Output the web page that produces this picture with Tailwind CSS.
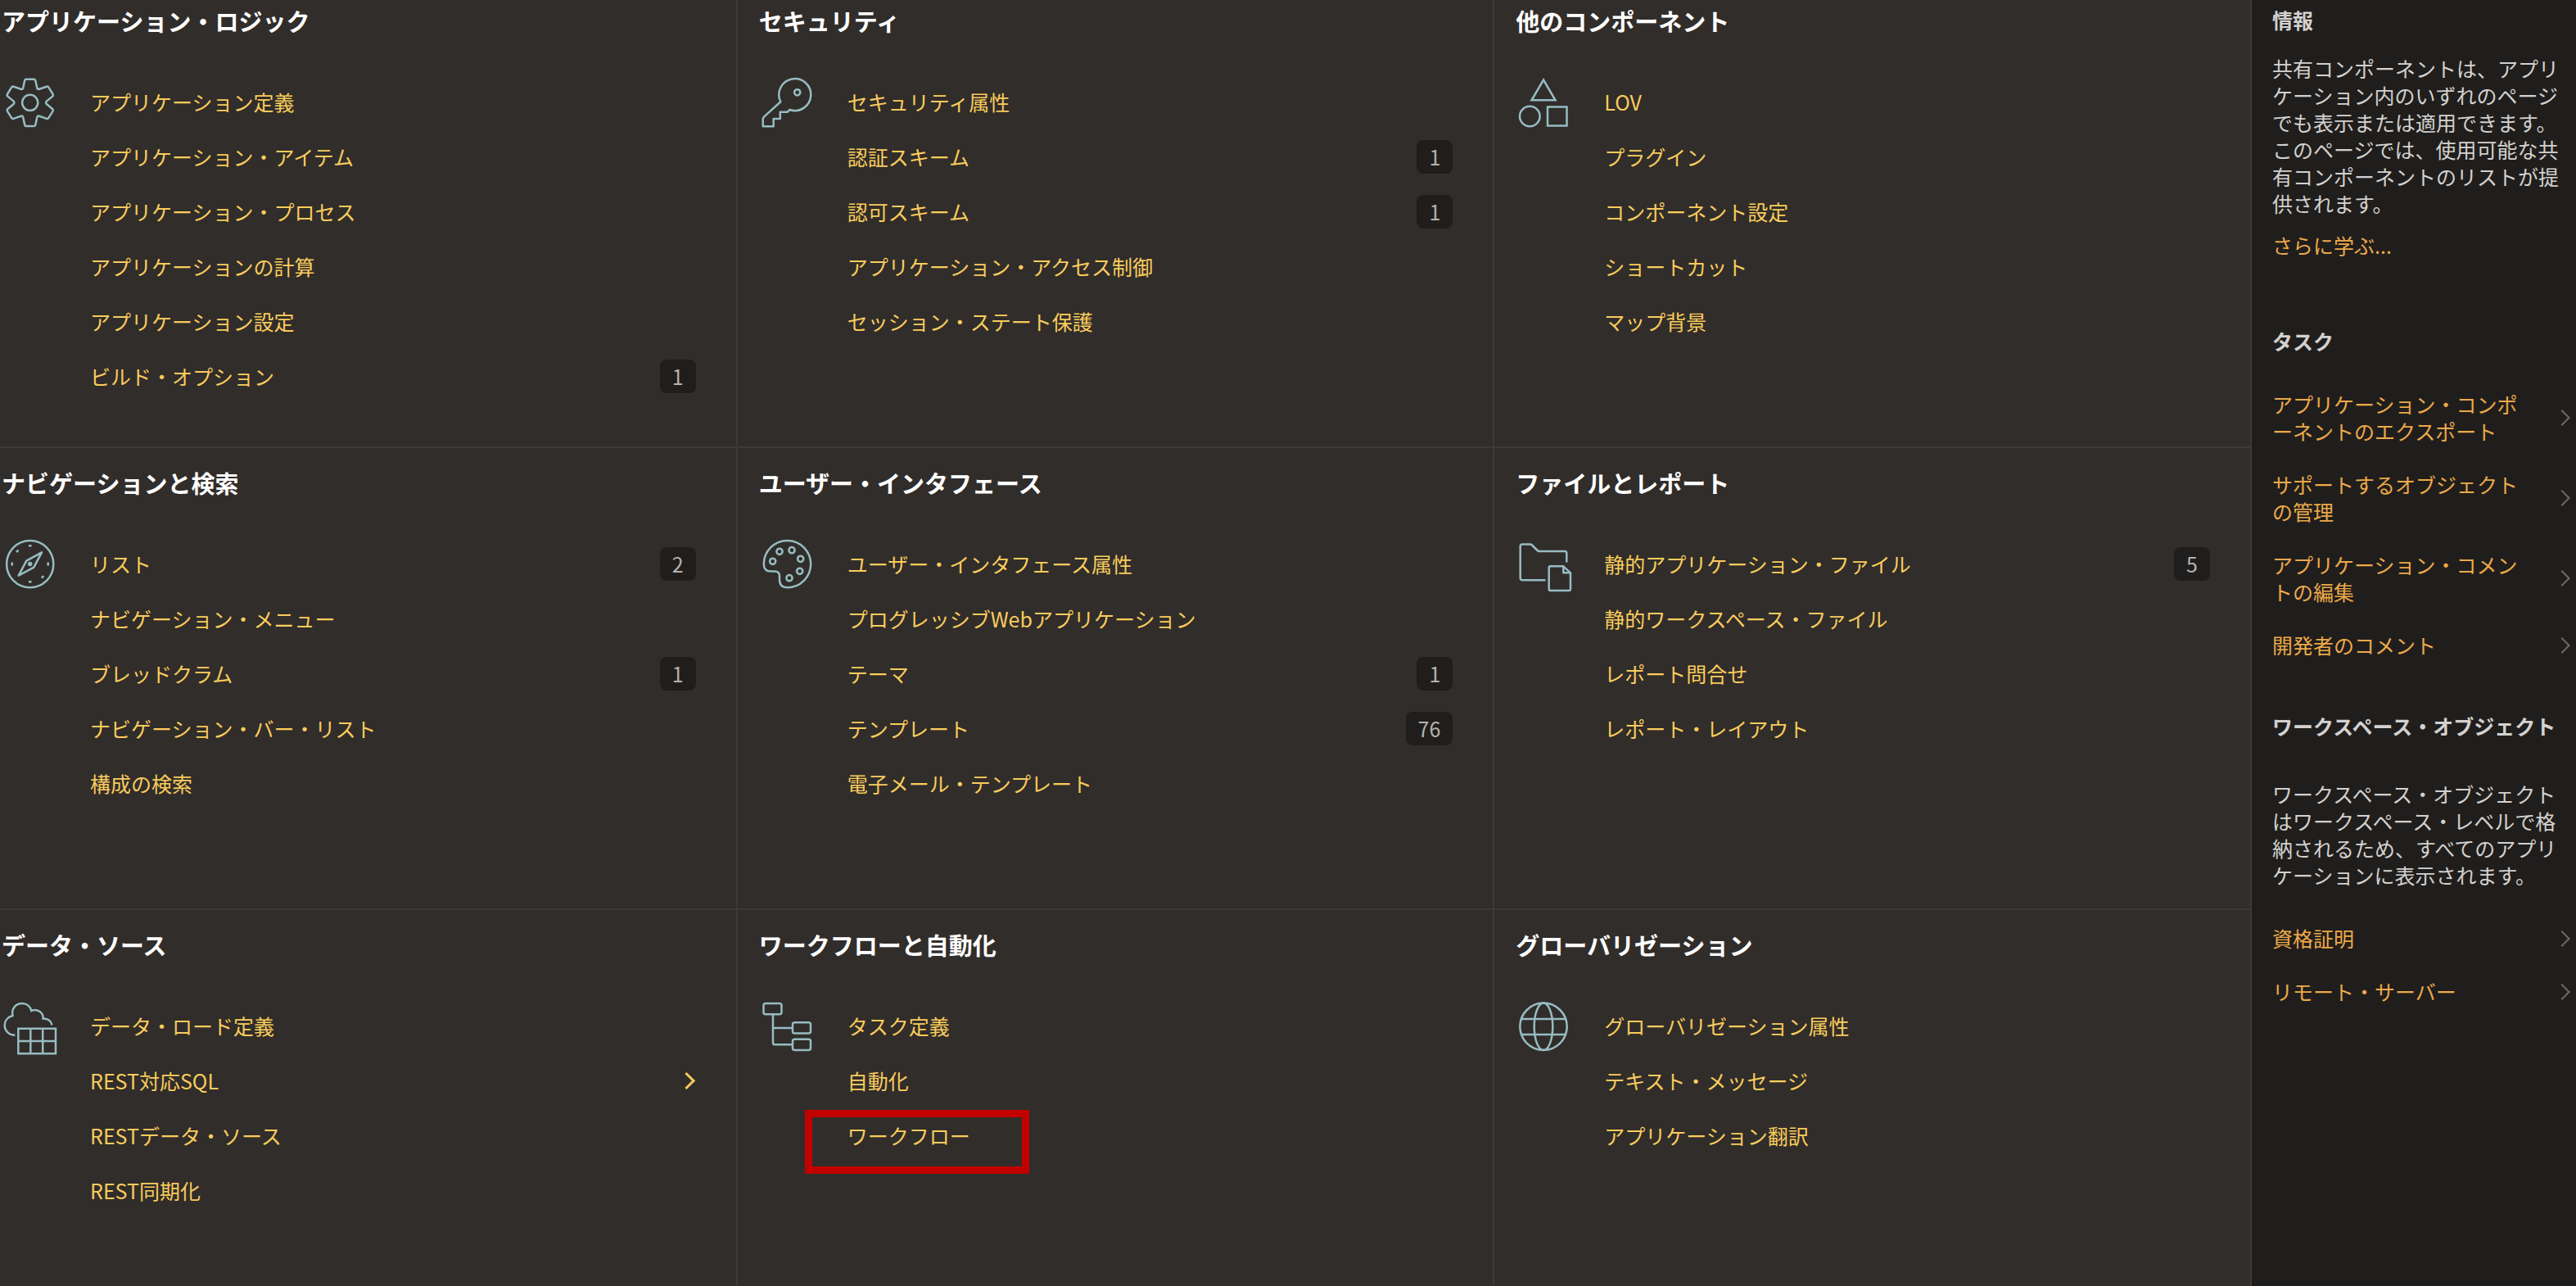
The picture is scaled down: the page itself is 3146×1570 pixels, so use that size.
<!DOCTYPE html>
<html lang="ja">
<head>
<meta charset="utf-8">
<title>共有コンポーネント</title>
<script src="https://cdn.jsdelivr.net/npm/@tailwindcss/browser@4"></script>
</head>
<body class="bg-[#312d2a] font-['Noto_Sans_CJK_JP',sans-serif] text-[25px] leading-[33px]">
<div class="flex h-screen overflow-hidden">
  <main class="min-w-0 flex-1 overflow-hidden">
    <div class="-mt-[17px] -ml-6 grid auto-rows-fr grid-cols-3 text-[#f9cc5d] [&_h2]:pl-0.5 [&_h2]:text-[29px] [&_h2]:leading-9 [&_h2]:font-bold [&_h2]:text-white [&_li]:flex [&_li]:h-[67px] [&_li]:items-center [&_li]:justify-between [&_li>span]:rounded-lg [&_li>span]:bg-[#201e1c] [&_li>span]:px-[15px] [&_li>span]:py-1 [&_li>span]:text-[#b5b2af] [&_section]:border-r-2 [&_section]:border-b-2 [&_section]:border-[#3e3a37] [&_section]:px-6 [&_section]:pt-6 [&_section]:pb-[52px] [&_section>div]:mt-12 [&_section>div]:flex [&_section>div]:pr-[25px] [&_section>div]:pl-1 [&_svg]:mt-0.5 [&_svg]:size-16 [&_svg]:shrink-0 [&_svg]:overflow-visible [&_svg]:fill-none [&_svg]:stroke-[#97bcc2] [&_svg]:stroke-[2.5px] [&_ul]:ml-[42px] [&_ul]:flex-1">

      <section>
        <h2>アプリケーション・ロジック</h2>
        <div>
          <svg viewBox="0 0 64 64" aria-hidden="true" stroke-linejoin="round"><path d="M28 3.700H37.500Q39 3.700 39.300 5.200L41.300 14.500Q42 16.500 44 15.800L53 12.700Q54.600 12.200 55.400 13.700L60.600 22Q61.300 23.400 60.100 24.600L52.800 30.600Q51.500 32.300 52.800 34L60.100 40Q61.300 41.200 60.600 42.600L55.400 50.900Q54.600 52.400 53 51.900L44 48.800Q42 48.100 41.300 50.100L39.300 59.400Q39 60.900 37.500 60.900H28Q26.500 60.900 26.200 59.400L24.200 50.100Q23.500 48.100 21.500 48.800L12.500 51.900Q10.900 52.400 10.100 50.900L4.900 42.600Q4.200 41.200 5.400 40L12.700 34Q14 32.300 12.700 30.600L5.400 24.600Q4.200 23.400 4.900 22L10.100 13.700Q10.900 12.200 12.500 12.700L21.500 15.800Q23.500 16.500 24.200 14.500L26.200 5.200Q26.500 3.700 28 3.700Z"/><circle cx="32.700" cy="32.300" r="9.600"/></svg>
          <ul>
            <li><a href="#">アプリケーション定義</a></li>
            <li><a href="#">アプリケーション・アイテム</a></li>
            <li><a href="#">アプリケーション・プロセス</a></li>
            <li><a href="#">アプリケーションの計算</a></li>
            <li><a href="#">アプリケーション設定</a></li>
            <li><a href="#">ビルド・オプション</a><span>1</span></li>
          </ul>
        </div>
      </section>

      <section>
        <h2>セキュリティ</h2>
        <div>
          <svg viewBox="0 0 64 64" aria-hidden="true" stroke-linejoin="round"><path d="M24.300 31.200A19.500 19.500 0 1 1 35.400 41L32.500 43.800H23.800V52H15.700V61.200H2.700V53Q2.700 51 4 49.600Z"/><circle cx="44.700" cy="19.800" r="3.600"/></svg>
          <ul>
            <li><a href="#">セキュリティ属性</a></li>
            <li><a href="#">認証スキーム</a><span>1</span></li>
            <li><a href="#">認可スキーム</a><span>1</span></li>
            <li><a href="#">アプリケーション・アクセス制御</a></li>
            <li><a href="#">セッション・ステート保護</a></li>
          </ul>
        </div>
      </section>

      <section>
        <h2>他のコンポーネント</h2>
        <div>
          <svg viewBox="0 0 64 64" aria-hidden="true"><path d="M32 4.500L46.500 29.300H17.500Z"/><circle cx="15.300" cy="49" r="12.300"/><path d="M37 37.500H60.500V60.500H37Z"/></svg>
          <ul>
            <li><a href="#">LOV</a></li>
            <li><a href="#">プラグイン</a></li>
            <li><a href="#">コンポーネント設定</a></li>
            <li><a href="#">ショートカット</a></li>
            <li><a href="#">マップ背景</a></li>
          </ul>
        </div>
      </section>

      <section>
        <h2>ナビゲーションと検索</h2>
        <div>
          <svg viewBox="0 0 64 64" aria-hidden="true" stroke-linejoin="round"><circle cx="32.700" cy="31.700" r="28.600"/><path d="M47 17.300L28.300 27.700L18.700 45.700L37.300 35.700Z"/><circle cx="32.700" cy="31.500" r="1.500"/><path d="M31 9.300H34.500M31 53.300H34.500M10.700 29.500V33.500M54.700 29.500V33.500M16 17L18.500 14.700M46.800 48.500L49.300 46.200"/></svg>
          <ul>
            <li><a href="#">リスト</a><span>2</span></li>
            <li><a href="#">ナビゲーション・メニュー</a></li>
            <li><a href="#">ブレッドクラム</a><span>1</span></li>
            <li><a href="#">ナビゲーション・バー・リスト</a></li>
            <li><a href="#">構成の検索</a></li>
          </ul>
        </div>
      </section>

      <section>
        <h2>ユーザー・インタフェース</h2>
        <div>
          <svg viewBox="0 0 64 64" aria-hidden="true"><path d="M3.800 31.700A28.700 28.700 0 1 1 32.500 60.300Q23 60.300 23 50.500V46Q23 40.500 17 40.500H12Q3.800 40.500 3.800 31.700Z"/><circle cx="14.700" cy="28.300" r="3.600"/><circle cx="23" cy="16.300" r="3.600"/><circle cx="38" cy="14.700" r="3.600"/><circle cx="48.700" cy="25.300" r="3.600"/><circle cx="47.700" cy="40.300" r="3.600"/><circle cx="35" cy="48.700" r="3.600"/></svg>
          <ul>
            <li><a href="#">ユーザー・インタフェース属性</a></li>
            <li><a href="#">プログレッシブWebアプリケーション</a></li>
            <li><a href="#">テーマ</a><span>1</span></li>
            <li><a href="#">テンプレート</a><span>76</span></li>
            <li><a href="#">電子メール・テンプレート</a></li>
          </ul>
        </div>
      </section>

      <section>
        <h2>ファイルとレポート</h2>
        <div>
          <svg viewBox="0 0 64 64" aria-hidden="true" stroke-linejoin="round" stroke-linecap="round"><path d="M33.500 51.300H6.500Q3.700 51.300 3.700 48.500V10Q3.700 7.500 6.200 7.500H15.500Q17 7.500 18 8.500L25.700 16H58Q60.300 16 60.300 18.300V28.500"/><path d="M56.300 34.300H40.500Q38.700 34.300 38.700 36V62.300Q38.700 64 40.500 64H63.200Q65 64 65 62.300V42.300ZM56.300 34.300V42.300H65"/></svg>
          <ul>
            <li><a href="#">静的アプリケーション・ファイル</a><span>5</span></li>
            <li><a href="#">静的ワークスペース・ファイル</a></li>
            <li><a href="#">レポート問合せ</a></li>
            <li><a href="#">レポート・レイアウト</a></li>
          </ul>
        </div>
      </section>

      <section>
        <h2>データ・ソース</h2>
        <div>
          <svg viewBox="0 0 64 64" aria-hidden="true"><path d="M14.400 42.700C6.500 42.700 1.700 37 1.700 30.500C1.700 25 5.500 20.500 11.500 19C9.500 11 15 3.900 23 3.900C28.500 3.900 33 7.500 34.300 13C41 10 49.500 15 48.500 22.500C54.500 22.500 58.700 25.500 59.400 30.500"/><path d="M18.300 34.700H64V65.200H18.300ZM33.300 34.700V65.200M48.200 34.700V65.200M18.300 50H64"/></svg>
          <ul>
            <li><a href="#">データ・ロード定義</a></li>
            <li>
              <a href="#">REST対応SQL</a>
              <i class="mr-1 block size-[15px] rotate-45 border-t-3 border-r-3 border-[#f9cc5d]"></i>
            </li>
            <li><a href="#">RESTデータ・ソース</a></li>
            <li><a href="#">REST同期化</a></li>
          </ul>
        </div>
      </section>

      <section>
        <h2>ワークフローと自動化</h2>
        <div>
          <svg viewBox="0 0 64 64" aria-hidden="true"><rect x="3.500" y="4" width="22" height="13.300" rx="2.500"/><rect x="39" y="27.300" width="22" height="13.300" rx="2.500"/><rect x="39" y="47.700" width="22" height="13.300" rx="2.500"/><path d="M15 17.300V52Q15 54.300 17.300 54.300H39M15 34H39"/></svg>
          <ul>
            <li><a href="#">タスク定義</a></li>
            <li><a href="#">自動化</a></li>
            <li class="relative"><a href="#">ワークフロー</a><b class="pointer-events-none absolute top-0.5 -left-[52px] h-[78px] w-[274px] border-9 border-[#c20000]"></b></li>
          </ul>
        </div>
      </section>

      <section>
        <h2>グローバリゼーション</h2>
        <div>
          <svg viewBox="0 0 64 64" aria-hidden="true"><circle cx="32" cy="32.300" r="28.700"/><ellipse cx="32" cy="32.300" rx="11.300" ry="28.700"/><path d="M5 23H59M5 42H59"/></svg>
          <ul>
            <li><a href="#">グローバリゼーション属性</a></li>
            <li><a href="#">テキスト・メッセージ</a></li>
            <li><a href="#">アプリケーション翻訳</a></li>
          </ul>
        </div>
      </section>
    </div>
  </main>

  <aside class="w-[396px] shrink-0 bg-[#201e1c] pt-2 pr-5 pl-[25px] text-[#d3d1cf] [line-break:loose] [&_a]:text-[#eca94a] [&_h3]:font-bold [&_i]:mr-[-10px] [&_i]:block [&_i]:size-[14px] [&_i]:shrink-0 [&_i]:rotate-45 [&_i]:border-t-2 [&_i]:border-r-2 [&_i]:border-[#6b6865] [&_li]:flex [&_li]:items-center [&_li]:justify-between [&_li]:py-4 [&_li>a]:max-w-[304px]">
    <h3>情報</h3>
    <p class="mt-[26px]">共有コンポーネントは、アプリケーション内のいずれのページでも表示または適用できます。このページでは、使用可能な共有コンポーネントのリストが提供されます。</p>
    <p class="mt-[18px]"><a href="#">さらに学ぶ...</a></p>
    <h3 class="mt-[84px]">タスク</h3>
    <ul class="mt-7">
      <li><a href="#">アプリケーション・コンポーネントのエクスポート</a><i></i></li>
      <li><a href="#">サポートするオブジェクトの管理</a><i></i></li>
      <li><a href="#">アプリケーション・コメントの編集</a><i></i></li>
      <li><a href="#">開発者のコメント</a><i></i></li>
    </ul>
    <h3 class="mt-[50px]">ワークスペース・オブジェクト</h3>
    <p class="mt-[50px]">ワークスペース・オブジェクトはワークスペース・レベルで格納されるため、すべてのアプリケーションに表示されます。</p>
    <ul class="mt-7">
      <li><a href="#">資格証明</a><i></i></li>
      <li><a href="#">リモート・サーバー</a><i></i></li>
    </ul>
  </aside>
</div>
</body>
</html>
